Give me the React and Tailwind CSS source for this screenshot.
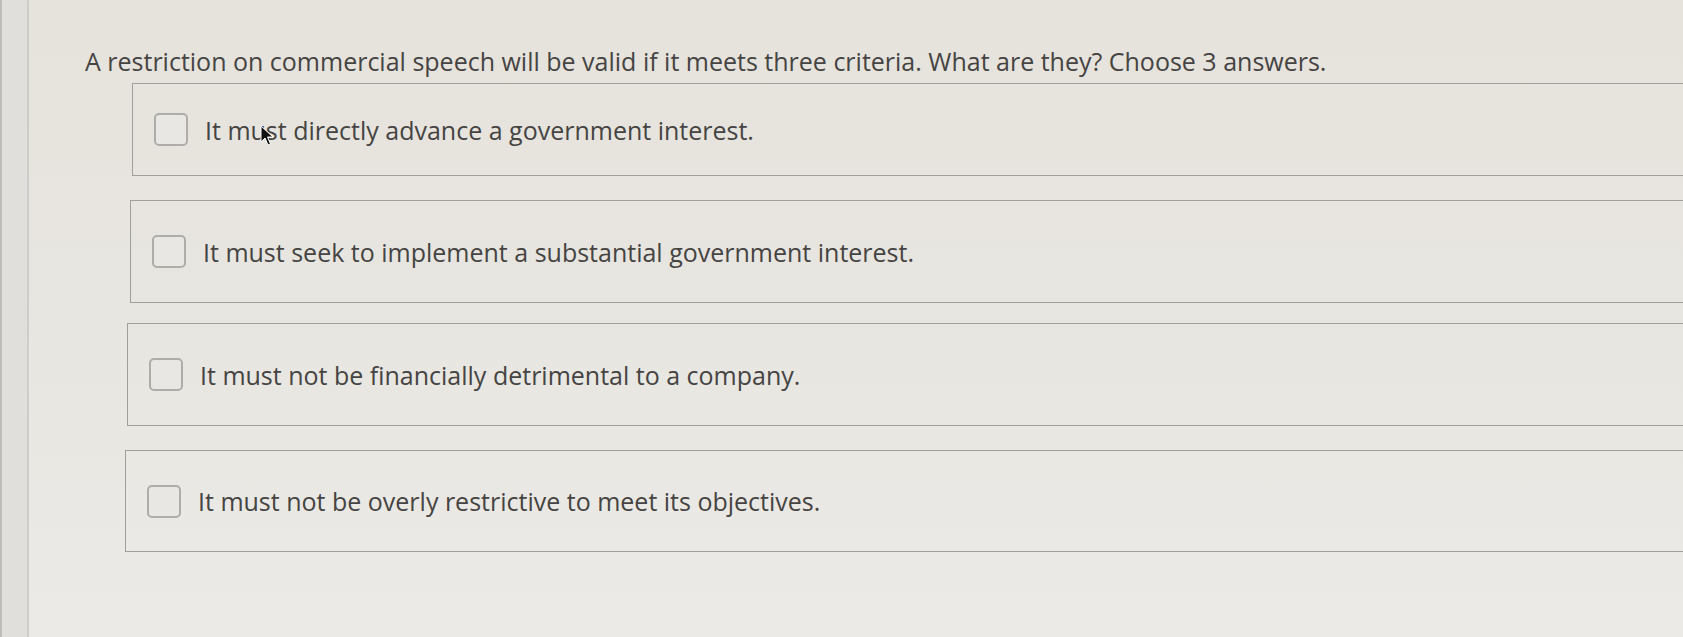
import React from 'react';

const options = [
  { text: 'It must directly advance a government interest.', box: 'ml-[47px] mt-[6px] h-[93px]', cursor: true },
  { text: 'It must seek to implement a substantial government interest.', box: 'ml-[45px] mt-[24px] h-[103px]' },
  { text: 'It must not be financially detrimental to a company.', box: 'ml-[42px] mt-[20px] h-[103px]' },
  { text: 'It must not be overly restrictive to meet its objectives.', box: 'ml-[40px] mt-[24px] h-[102px]' },
];

const Cursor = () => (
  <svg className="absolute left-[54px] top-[11px]" width="16" height="22" viewBox="0 0 16 22">
    <path d="M2 1 L2 17 L6 13 L9 20 L11.5 19 L8.5 12 L14 12 Z" fill="#111" stroke="#fff" strokeWidth="1" strokeLinejoin="round" />
  </svg>
);

export default function App() {
  return (
    <div className="flex h-[637px] w-full overflow-hidden bg-[#e7e5e0] font-['Open_Sans',sans-serif] text-[#454442]">
      {/* screen bezel strip */}
      <div className="w-[29px] shrink-0 border-l-2 border-r-2 border-l-[#bdbcb8] border-r-[#cfcdc9] bg-[#e0dfdb]" />

      <div className="flex flex-1 flex-col bg-gradient-to-b from-[#e6e2dc] via-[#e8e6e1] to-[#eceae6] pl-[56px] pt-[45px]">
        <h1 className="text-[25px] leading-[32px] font-normal">
          A restriction on commercial speech will be valid if it meets three criteria. What are they? Choose 3 answers.
        </h1>

        {options.map((o, i) => (
          <label
            key={i}
            className={`flex items-center border-[1.5px] border-r-0 border-[#a09f9c] pl-[21px] ${o.box}`}
          >
            <span className="h-[33px] w-[34px] shrink-0 rounded-[5px] border-2 border-[#aeadaa] bg-[#e9e7e3]" />
            <span className="relative ml-[17px] text-[25px] leading-[32px]">
              {o.text}
              {o.cursor && <Cursor />}
            </span>
          </label>
        ))}
      </div>
    </div>
  );
}
